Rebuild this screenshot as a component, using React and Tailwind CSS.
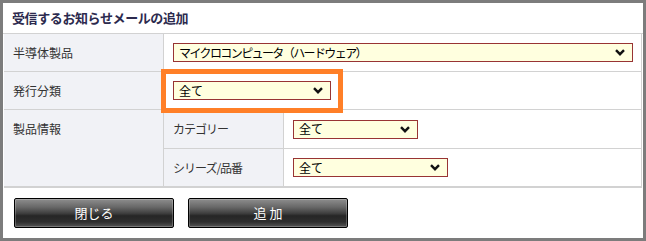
import React from "react";

const FONT = { fontFamily: '"Noto Sans CJK JP", "Noto Sans", sans-serif' };

function Chevron() {
  return (
    <svg width="10" height="7" viewBox="0 0 10 7" className="shrink-0">
      <path d="M1 1.2 L5 5.2 L9 1.2" fill="none" stroke="#111" strokeWidth="2.4" />
    </svg>
  );
}

function Select({ value, width, tight }) {
  return (
    <div
      className="flex h-[19px] items-center justify-between border border-[#983434] bg-[#ffffdf] pl-[5px] pr-[7px]"
      style={{ width }}
    >
      <span
        className={`text-[12px] leading-none text-black ${tight ? "tracking-[-1.6px]" : ""}`}
      >
        {value}
      </span>
      <Chevron />
    </div>
  );
}

function GlossButton({ children }) {
  return (
    <button className="flex h-[30px] w-[160px] items-center justify-center rounded-[2px] border border-black bg-[linear-gradient(to_bottom,#8e8e8e_0%,#666_30%,#3d3d3d_52%,#262626_60%,#2e2e2e_82%,#565656_100%)] text-[13px] text-white shadow-[inset_0_0_0_1px_rgba(255,255,255,0.22)]">
      {children}
    </button>
  );
}

export default function App() {
  return (
    <div className="h-[241px] w-[646px] overflow-hidden bg-[#7c7c7c] pl-[3px] pt-[3px]" style={FONT}>
      <div className="flex h-[235px] w-[640px] flex-col bg-white">
        {/* title */}
        <div className="flex h-[31px] items-center border-b border-[#d2d2d2] pl-[9px]">
          <h1 className="text-[13px] font-bold tracking-[-0.4px] text-[#2c2a4e]">
            受信するお知らせメールの追加
          </h1>
        </div>

        {/* form table */}
        <div className="ml-[1px] w-[638px] border-r border-[#d2d2d2] text-[12px] text-[#333]">
          <div className="flex h-[38px] border-b border-[#d2d2d2]">
            <div className="flex w-[160px] items-center border-r border-[#d2d2d2] bg-[#f1f2f6] pl-[9px]">
              半導体製品
            </div>
            <div className="flex flex-1 items-center pl-[9px]">
              <Select value="マイクロコンピュータ（ハードウェア）" width={460} tight />
            </div>
          </div>

          <div className="flex h-[38px] border-b border-[#d2d2d2]">
            <div className="flex w-[160px] items-center border-r border-[#d2d2d2] bg-[#f1f2f6] pl-[9px]">
              発行分類
            </div>
            <div className="relative flex flex-1 items-center pl-[9px]">
              <Select value="全て" width={158} />
              <div className="absolute left-[-3px] top-[-3px] h-[44px] w-[182px] border-[5px] border-[#ff7f27]" />
            </div>
          </div>

          <div className="flex h-[78px] border-b-2 border-[#d2d2d2]">
            <div className="w-[160px] border-r border-[#d2d2d2] bg-[#f1f2f6] pl-[9px] pt-[10px] leading-[18px]">
              製品情報
            </div>
            <div className="flex flex-1 flex-col">
              <div className="flex h-[39px] border-b border-[#d2d2d2]">
                <div className="flex w-[120px] items-center border-r border-[#d2d2d2] bg-[#f1f2f6] pl-[9px] tracking-[-1px]">
                  カテゴリー
                </div>
                <div className="flex flex-1 items-center pl-[9px]">
                  <Select value="全て" width={125} />
                </div>
              </div>
              <div className="flex flex-1">
                <div className="flex w-[120px] items-center border-r border-[#d2d2d2] bg-[#f1f2f6] pl-[9px] tracking-[-1px]">
                  シリーズ/品番
                </div>
                <div className="flex flex-1 items-center pl-[9px]">
                  <Select value="全て" width={155} />
                </div>
              </div>
            </div>
          </div>
        </div>

        {/* actions */}
        <div className="ml-[11px] mt-[10px] flex gap-[14px]">
          <GlossButton>閉じる</GlossButton>
          <GlossButton>追 加</GlossButton>
        </div>
      </div>
    </div>
  );
}
